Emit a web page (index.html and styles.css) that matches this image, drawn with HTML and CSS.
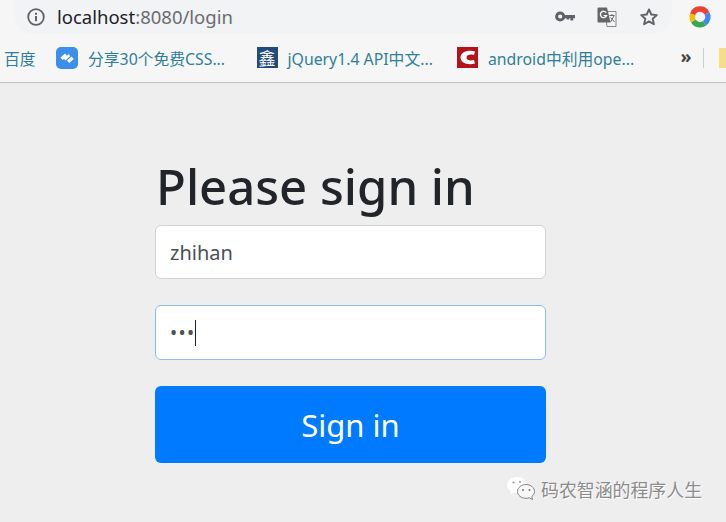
FILE: index.html
```html
<!DOCTYPE html>
<html lang="en">
<head>
    <meta charset="UTF-8">
    <title>Please sign in</title>
    <link rel="stylesheet" href="styles.css">
</head>
<body>
    <header class="browser">
        <div class="toolbar">
            <div class="omnibox">
                <svg class="info-icon" width="18" height="18" viewBox="0 0 18 18">
                    <circle cx="9" cy="9" r="7.800" fill="none" stroke="#5f6368" stroke-width="1.800"/>
                    <rect x="8" y="8" width="2" height="5.200" fill="#5f6368"/>
                    <rect x="8" y="4.800" width="2" height="2" fill="#5f6368"/>
                </svg>
                <span class="url"><span class="url-host">localhost</span>:8080/login</span>
                <div class="omnibox-actions">
                    <svg class="key-icon" width="20" height="11" viewBox="0 0 20 11">
                        <circle cx="5.200" cy="5.500" r="3.600" fill="none" stroke="#5f6368" stroke-width="3"/>
                        <path d="M9 4h11v3.200h-1.800v2.400h-2.800V7.200h-1.200v1.400h-2.600V7.200H9z" fill="#5f6368"/>
                    </svg>
                    <svg width="20" height="20" viewBox="0 0 20 20">
                        <path d="M8 4.500h11v15H10z" fill="#f4f4f4" stroke="#888" stroke-width="1"/>
                        <path d="M1.500 0.500h8.500l3.500 15h-12a1 1 0 0 1-1-1v-13a1 1 0 0 1 1-1z" fill="#666"/>
                        <path d="M9.200 5.600a3.200 3.200 0 1 0 .4 3h-3" fill="none" stroke="#fff" stroke-width="1.300"/>
                        <path d="M12.500 8.500h5M15 7v1.500M13.500 15l3.500-6M13.500 10.500l4 4.500" fill="none" stroke="#666" stroke-width="1"/>
                    </svg>
                    <svg width="20" height="20" viewBox="0 0 20 20">
                        <path d="M10 2.400l2.300 5.100 5.500.6-4.100 3.700 1.200 5.400-4.900-2.800-4.900 2.800 1.200-5.400-4.100-3.700 5.500-.6z" fill="none" stroke="#5f6368" stroke-width="1.900" stroke-linejoin="round"/>
                    </svg>
                </div>
            </div>
            <svg class="profile" width="22" height="22" viewBox="0 0 22 22" fill="none" stroke-width="5.400">
                <path d="M3.600 8.300A7.800 7.800 0 0 1 18 7.400" stroke="#ea4335"/>
                <path d="M18 7.400A7.800 7.800 0 0 1 15.600 17.300" stroke="#4285f4"/>
                <path d="M15.600 17.300A7.800 7.800 0 0 1 4.300 15" stroke="#34a853"/>
                <path d="M4.300 15A7.800 7.800 0 0 1 3.600 8.300" stroke="#fbbc05"/>
            </svg>
        </div>
        <nav class="bookmarks">
            <span class="bookmark-first">百度</span>
            <span class="bookmark">
                <svg class="favicon" width="22" height="22" viewBox="0 0 22 22">
                    <rect width="22" height="22" rx="5" fill="#3b8eea"/>
                    <path d="M4.500 10.500l4.500-4 2.200 2.400-4.500 4zM11 13.500l4.500-4 2.200 2.400-4.500 4z" fill="#fff"/>
                    <path d="M8.500 12.500l5-4.500" stroke="#fff" stroke-width="2.600"/>
                </svg>
                分享30个免费CSS...
            </span>
            <span class="bookmark">
                <span class="favicon favicon-glyph">鑫</span>
                jQuery1.4 API中文...
            </span>
            <span class="bookmark">
                <svg class="favicon" width="21" height="21" viewBox="0 0 21 21">
                    <rect width="21" height="21" fill="#b5121b"/>
                    <path d="M18 4.500C11 2.500 3.500 5 3.500 10.500s7.500 8 14.500 6l-1-3.500c-3.500 1-7.500.5-7.500-2.500s4-3.500 7.500-2.500z" fill="#fff"/>
                </svg>
                android中利用ope...
            </span>
            <span class="bookmark-more">»</span>
            <span class="bookmark-sep"></span>
            <span class="bookmark-folder"></span>
        </nav>
    </header>

    <main class="page">
        <form class="signin">
            <h1 class="signin-title">Please sign in</h1>
            <div class="field">zhihan</div>
            <div class="field field-focus"><span class="dots">•••</span><span class="caret"></span></div>
            <button class="signin-btn" type="button">Sign in</button>
        </form>
        <div class="watermark">
            <svg width="30" height="26" viewBox="0 0 30 26">
                <path d="M11 1c5.500 0 10 3.500 10 8 0 4.500-4.500 8-10 8-1.200 0-2.300-.2-3.300-.5L4 18.500l.8-3.500C2.500 13.500 1 11.400 1 9c0-4.500 4.500-8 10-8z" fill="#fff"/>
                <path d="M20 8.500c4.700 0 8.500 3.200 8.500 7 0 2-1 3.700-2.700 5l.7 3-3.200-1.700c-1 .3-2.100.5-3.300.5-4.700 0-8.500-2.900-8.500-6.800s3.800-7 8.500-7z" fill="#f7f7f7" stroke="#777" stroke-width="0.900"/>
                <circle cx="7.500" cy="6.500" r="1.100" fill="#999"/>
                <circle cx="14" cy="6" r="1.100" fill="#999"/>
                <circle cx="17" cy="14" r="1" fill="#777"/>
                <circle cx="23.500" cy="14" r="1" fill="#777"/>
            </svg>
            <span>码农智涵的程序人生</span>
        </div>
    </main>
</body>
</html>
```

FILE: styles.css
```css
html, body {
    margin: 0;
    padding: 0;
}

body {
    width: 726px;
    height: 522px;
    overflow: hidden;
    position: relative;
    background: #eeeeee;
    font-family: "Open Sans", "Noto Sans CJK SC", sans-serif;
}

.browser {
    height: 82px;
    background: #f6f6f6;
    border-bottom: 1px solid #c4c4c4;
}

.toolbar {
    height: 33px;
    display: flex;
    align-items: center;
}

.omnibox {
    width: 658px;
    height: 33px;
    margin-left: 14px;
    padding: 0 13px;
    box-sizing: border-box;
    display: flex;
    align-items: center;
    background: #f1f3f4;
    border-radius: 0 0 17px 17px;
}

.info-icon {
    margin-right: 12px;
}

.url {
    font-family: "Noto Sans", sans-serif;
    font-size: 18.500px;
    color: #6a6d70;
    margin-top: -1px;
}

.url-host {
    color: #202225;
}

.omnibox-actions {
    margin-left: auto;
    display: flex;
    align-items: center;
    gap: 22px;
    margin-right: 0;
}

.key-icon {
    margin-top: -1px;
}

.profile {
    margin-left: 17px;
}

.bookmarks {
    height: 49px;
    box-sizing: border-box;
    padding-top: 2px;
    display: flex;
    align-items: center;
    font-family: "Noto Sans", "Noto Sans CJK SC", sans-serif;
    font-size: 15.800px;
    color: #2f7f9b;
}

.bookmark {
    width: 200.500px;
    flex: none;
    display: flex;
    align-items: center;
    gap: 10px;
    white-space: nowrap;
}

.favicon {
    margin-bottom: 2px;
}

.bookmark-first {
    width: 56px;
    flex: none;
    padding-left: 4px;
    box-sizing: border-box;
}

.favicon-glyph {
    width: 21px;
    height: 21px;
    flex: none;
    display: flex;
    align-items: center;
    justify-content: center;
    background: #234a7c;
    color: #fff;
    font-family: "Noto Sans CJK SC", sans-serif;
    font-size: 17px;
    line-height: 21px;
}

.bookmark-more {
    margin-left: 23px;
    margin-top: -5px;
    font-size: 18px;
    font-weight: bold;
    color: #444;
}

.bookmark-sep {
    width: 1px;
    height: 20px;
    margin-left: 11px;
    margin-bottom: 2px;
    background: #cfcfcf;
}

.bookmark-folder {
    width: 10px;
    height: 20px;
    margin-left: 16px;
    margin-bottom: 2px;
    background: #f7dd86;
}

.page {
    height: 439px;
    background: #eeeeee;
}

.signin {
    width: 391px;
    margin-left: 155px;
    padding-top: 71px;
    display: flex;
    flex-direction: column;
}

.signin-title {
    margin: 0 0 6px 1px;
    font-family: "Noto Sans", sans-serif;
    font-size: 49px;
    line-height: 65px;
    font-weight: 500;
    color: #212529;
}

.field {
    height: 54px;
    box-sizing: border-box;
    margin-bottom: 26px;
    padding: 0 14px;
    display: flex;
    align-items: center;
    background: #fff;
    border: 1px solid #ced4da;
    border-radius: 6px;
    font-family: "Noto Sans", sans-serif;
    font-size: 20px;
    color: #495057;
}

.field-focus {
    height: 55px;
    border-color: #8fbde8;
}

.dots {
    font-size: 19px;
    letter-spacing: 1.300px;
}

.caret {
    width: 1px;
    height: 26px;
    background: #222;
}

.signin-btn {
    height: 77px;
    border: none;
    border-radius: 6px;
    background: #007bff;
    color: #fff;
    font-family: "Noto Sans", sans-serif;
    font-size: 31px;
}

.watermark {
    position: absolute;
    left: 506px;
    top: 476px;
    display: flex;
    align-items: center;
    gap: 5px;
    font-family: "Noto Sans CJK SC", sans-serif;
    font-size: 17.900px;
    color: #8c8c8c;
    text-shadow: 1px 1px 0 #fff;
}
```
